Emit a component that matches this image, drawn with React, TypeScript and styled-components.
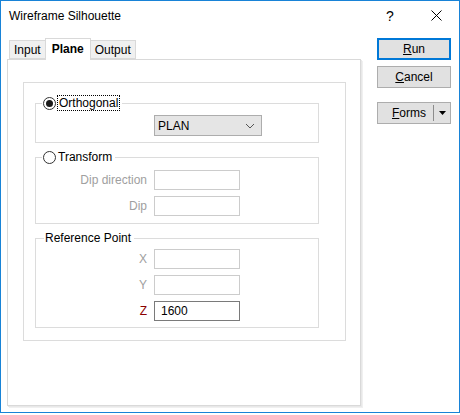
import React from "react";
import styled, { createGlobalStyle } from "styled-components";

const GlobalStyle = createGlobalStyle`
    html, body {
        margin: 0;
        padding: 0;
        background: #ffffff;
    }
    body {
        font-family: "Liberation Sans", Arial, sans-serif;
        font-size: 12px;
        color: #000;
    }
`;

const Window = styled.div`
    width: 460px;
    height: 413px;
    box-sizing: border-box;
    border: 1px solid #1883d7;
    background: #fff;
    display: flex;
    flex-direction: column;
`;

const TitleBar = styled.div`
    height: 29px;
    display: flex;
    align-items: center;
    padding-left: 8px;
`;

const Title = styled.span`
    flex: 1;
    font-size: 12px;
`;

const TitleButton = styled.div`
    width: 46px;
    height: 29px;
    display: flex;
    align-items: center;
    justify-content: center;
    font-size: 14px;
`;

const Body = styled.div`
    display: flex;
    padding-left: 6px;
    padding-top: 8px;
`;

const TabsColumn = styled.div`
    display: flex;
    flex-direction: column;
`;

const TabStrip = styled.div`
    display: flex;
    align-items: flex-end;
    height: 21px;
    padding-left: 2px;
    position: relative;
    z-index: 1;
`;

const Tab = styled.div<{ $active?: boolean }>`
    box-sizing: border-box;
    height: ${(p) => (p.$active ? "22px" : "19px")};
    margin-bottom: ${(p) => (p.$active ? "-1px" : "0")};
    padding: ${(p) => (p.$active ? "3px 6px 0" : "2px 4px 0")};
    border: 1px solid #d9d9d9;
    border-bottom: ${(p) => (p.$active ? "none" : "1px solid #d9d9d9")};
    margin-left: ${(p) => (p.$active ? "-1px" : "0")};
    margin-right: ${(p) => (p.$active ? "-1px" : "0")};
    background: ${(p) => (p.$active ? "#fff" : "#f0f0f0")};
    font-weight: ${(p) => (p.$active ? "bold" : "normal")};
    position: relative;
    z-index: ${(p) => (p.$active ? 2 : 1)};
`;

const Panel = styled.div`
    width: 354px;
    height: 347px;
    box-sizing: border-box;
    border: 1px solid #d9d9d9;
    box-shadow: 1px 1px 0 #e8e8e8, 2px 2px 0 #f0f0f0;
    padding: 22px 0 0 15px;
`;

const Frame = styled.div`
    width: 323px;
    height: 259px;
    box-sizing: border-box;
    border: 1px solid #dcdcdc;
    padding: 12px 0 0 11px;
    display: flex;
    flex-direction: column;
    gap: 6px;
`;

const Group = styled.fieldset<{ $pt: number; $pb: number }>`
    width: 284px;
    box-sizing: border-box;
    margin: 0;
    border: 1px solid #dcdcdc;
    padding: ${(p) => p.$pt}px 0 ${(p) => p.$pb}px 0;
    min-width: 0;
`;

const Legend = styled.legend<{ $ml: number }>`
    margin-left: ${(p) => p.$ml}px;
    padding: 0 3px 0 1px;
    height: 16px;
    line-height: 16px;
    display: flex;
    align-items: center;
    gap: 2px;
`;

const Radio = styled.span<{ $checked?: boolean }>`
    width: 13px;
    height: 13px;
    box-sizing: border-box;
    border: 1px solid #333;
    border-radius: 50%;
    background: #fff;
    display: inline-flex;
    align-items: center;
    justify-content: center;

    &::after {
        content: "";
        width: 7px;
        height: 7px;
        border-radius: 50%;
        background: ${(p) => (p.$checked ? "#1a1a1a" : "transparent")};
    }
`;

const FocusLabel = styled.span`
    outline: 1px dotted #000;
    line-height: 14px;
    padding: 0 1px;
`;

const Rows = styled.div`
    display: grid;
    grid-template-columns: 111px 86px;
    column-gap: 7px;
    row-gap: 6px;
    align-items: center;
`;

const FieldLabel = styled.span<{ $tone: "off" | "req" | "on" }>`
    text-align: right;
    color: ${(p) =>
        p.$tone === "off" ? "#a0a0a0" : p.$tone === "req" ? "#8b0000" : "#000"};
`;

const Input = styled.div<{ $enabled?: boolean }>`
    height: 20px;
    box-sizing: border-box;
    border: 1px solid ${(p) => (p.$enabled ? "#7a7a7a" : "#cccccc")};
    background: #fff;
    padding-left: 6px;
    display: flex;
    align-items: center;
`;

const ComboRow = styled.div`
    padding-left: 118px;
`;

const Combo = styled.div`
    width: 108px;
    height: 21px;
    box-sizing: border-box;
    border: 1px solid #adadad;
    background: #e5e5e5;
    display: flex;
    align-items: center;
    justify-content: space-between;
    padding: 0 6px 0 3px;
    color: #000;
`;

const ButtonsColumn = styled.div`
    margin-left: 16px;
    display: flex;
    flex-direction: column;
`;

const Button = styled.div<{ $default?: boolean; $gap: number }>`
    width: 74px;
    height: 22px;
    box-sizing: border-box;
    margin-top: ${(p) => p.$gap}px;
    border: ${(p) => (p.$default ? "2px solid #0078d7" : "1px solid #adadad")};
    background: #e1e1e1;
    display: flex;
    align-items: center;
    justify-content: center;
`;

const SplitButton = styled(Button)`
    justify-content: flex-end;
    padding-right: 4px;
`;

const Divider = styled.span`
    width: 1px;
    height: 16px;
    background: #8c8c8c;
    margin: 0 5px 0 7px;
`;

const Chevron = () => (
    <svg width="10" height="6" viewBox="0 0 10 6">
        <path d="M1 1 L5 5 L9 1" fill="none" stroke="#555" strokeWidth="1" />
    </svg>
);

const CloseIcon = () => (
    <svg width="11" height="11" viewBox="0 0 11 11">
        <path d="M0.5 0.5 L10.5 10.5 M10.5 0.5 L0.5 10.5" stroke="#000" strokeWidth="1" />
    </svg>
);

const DropTriangle = () => (
    <svg width="7" height="4" viewBox="0 0 7 4">
        <path d="M0 0 H7 L3.5 4 Z" fill="#000" />
    </svg>
);

export default function App() {
    return (
        <>
            <GlobalStyle />
            <Window>
                <TitleBar>
                    <Title>Wireframe Silhouette</Title>
                    <TitleButton>?</TitleButton>
                    <TitleButton>
                        <CloseIcon />
                    </TitleButton>
                </TitleBar>
                <Body>
                    <TabsColumn>
                        <TabStrip>
                            <Tab>Input</Tab>
                            <Tab $active>Plane</Tab>
                            <Tab>Output</Tab>
                        </TabStrip>
                        <Panel>
                            <Frame>
                                <Group $pt={4} $pb={6}>
                                    <Legend $ml={6}>
                                        <Radio $checked />
                                        <FocusLabel>Orthogonal</FocusLabel>
                                    </Legend>
                                    <ComboRow>
                                        <Combo>
                                            <span>PLAN</span>
                                            <Chevron />
                                        </Combo>
                                    </ComboRow>
                                </Group>
                                <Group $pt={5} $pb={7}>
                                    <Legend $ml={6}>
                                        <Radio />
                                        <span>Transform</span>
                                    </Legend>
                                    <Rows>
                                        <FieldLabel $tone="off">Dip direction</FieldLabel>
                                        <Input />
                                        <FieldLabel $tone="off">Dip</FieldLabel>
                                        <Input />
                                    </Rows>
                                </Group>
                                <Group $pt={3} $pb={6}>
                                    <Legend $ml={8}>Reference Point</Legend>
                                    <Rows>
                                        <FieldLabel $tone="off">X</FieldLabel>
                                        <Input />
                                        <FieldLabel $tone="off">Y</FieldLabel>
                                        <Input />
                                        <FieldLabel $tone="req">Z</FieldLabel>
                                        <Input $enabled>1600</Input>
                                    </Rows>
                                </Group>
                            </Frame>
                        </Panel>
                    </TabsColumn>
                    <ButtonsColumn>
                        <Button $default $gap={0}>
                            <span>
                                <u>R</u>un
                            </span>
                        </Button>
                        <Button $gap={6}>
                            <span>
                                <u>C</u>ancel
                            </span>
                        </Button>
                        <SplitButton $gap={14}>
                            <span>
                                <u>F</u>orms
                            </span>
                            <Divider />
                            <DropTriangle />
                        </SplitButton>
                    </ButtonsColumn>
                </Body>
            </Window>
        </>
    );
}
